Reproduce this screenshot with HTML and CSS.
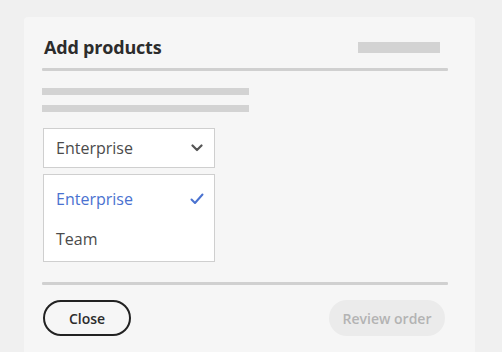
FILE: index.html
```html
<!DOCTYPE html>
<html>
<head>
<meta charset="utf-8">
<link rel="stylesheet" href="styles.css">
</head>
<body>
<div class="page">
  <div class="card">
    <div class="header">
      <h1 class="title">Add products</h1>
      <div class="ph ph-price"></div>
    </div>
    <div class="divider"></div>
    <div class="ph ph-line first"></div>
    <div class="ph ph-line"></div>
    <div class="select">
      <span class="select-label">Enterprise</span>
      <svg class="chev" width="12" height="8" viewBox="0 0 12 8"><path d="M1.5 1.5 L6 6 L10.5 1.5" fill="none" stroke="#555" stroke-width="2.2" stroke-linecap="round" stroke-linejoin="round"/></svg>
    </div>
    <div class="menu">
      <div class="item selected"><span>Enterprise</span>
        <svg class="check" width="14" height="12" viewBox="0 0 14 12"><path d="M1.5 6.5 L5 10 L12.5 1.5" fill="none" stroke="#4a72d0" stroke-width="2" stroke-linecap="round" stroke-linejoin="round"/></svg>
      </div>
      <div class="item"><span>Team</span></div>
    </div>
    <div class="divider bottom"></div>
    <div class="actions">
      <button class="btn close">Close</button>
      <button class="btn review">Review order</button>
    </div>
  </div>
</div>
</body>
</html>
```
FILE: styles.css
```css
html, body {
  margin: 0;
  padding: 0;
  background: #f0f0f0;
  font-family: "Open Sans", "Noto Sans", sans-serif;
}
.page {
  padding: 17px 27px 0 24px;
  height: 352px;
  box-sizing: border-box;
}
.card {
  background: #f6f6f6;
  border-radius: 4px 4px 0 0;
  height: 100%;
  box-sizing: border-box;
  padding: 13px 27px 0 18px;
}
.header {
  display: flex;
  justify-content: space-between;
  align-items: center;
  height: 34px;
  padding-left: 2px;
  padding-right: 8px;
}
.title {
  margin: 0;
  font-size: 18px;
  font-weight: 700;
  color: #2c2c2c;
  letter-spacing: -0.2px;
}
.ph {
  background: #d3d3d3;
}
.ph-price {
  width: 82px;
  height: 11px;
}
.divider {
  height: 3px;
  background: #d0d0d0;
  margin-top: 4px;
  border-radius: 1px;
}
.ph-line {
  width: 207px;
  height: 7px;
  margin-top: 10px;
}
.ph-line.first {
  margin-top: 17px;
}
.select {
  margin-top: 16px;
  margin-left: 1px;
  width: 172px;
  height: 40px;
  box-sizing: border-box;
  background: #fff;
  border: 1px solid #cfcfcf;
  display: flex;
  align-items: center;
  justify-content: space-between;
  padding: 0 11px 0 12px;
}
.select-label {
  font-size: 16px;
  color: #4b4b4b;
}
.chev {
  display: block;
}
.menu {
  margin-top: 6px;
  margin-left: 1px;
  width: 172px;
  height: 88px;
  box-sizing: border-box;
  background: #fff;
  border: 1px solid #cfcfcf;
  padding: 4px 0;
}
.item {
  height: 40px;
  display: flex;
  align-items: center;
  justify-content: space-between;
  padding: 0 10px 0 12px;
  font-size: 16px;
  color: #4b4b4b;
}
.item.selected {
  color: #4a72d0;
}
.check {
  display: block;
}
.divider.bottom {
  margin-top: 20px;
}
.actions {
  display: flex;
  justify-content: space-between;
  margin-top: 15px;
  padding-left: 1px;
  padding-right: 3px;
}
.btn {
  font-family: inherit;
  height: 36px;
  border-radius: 18px;
  font-size: 14px;
  font-weight: 600;
  box-sizing: border-box;
  padding: 0;
}
.close {
  width: 88px;
  background: transparent;
  border: 2px solid #222;
  color: #2c2c2c;
}
.review {
  width: 116px;
  background: #ebebeb;
  border: none;
  color: #b3b3b3;
}
```
